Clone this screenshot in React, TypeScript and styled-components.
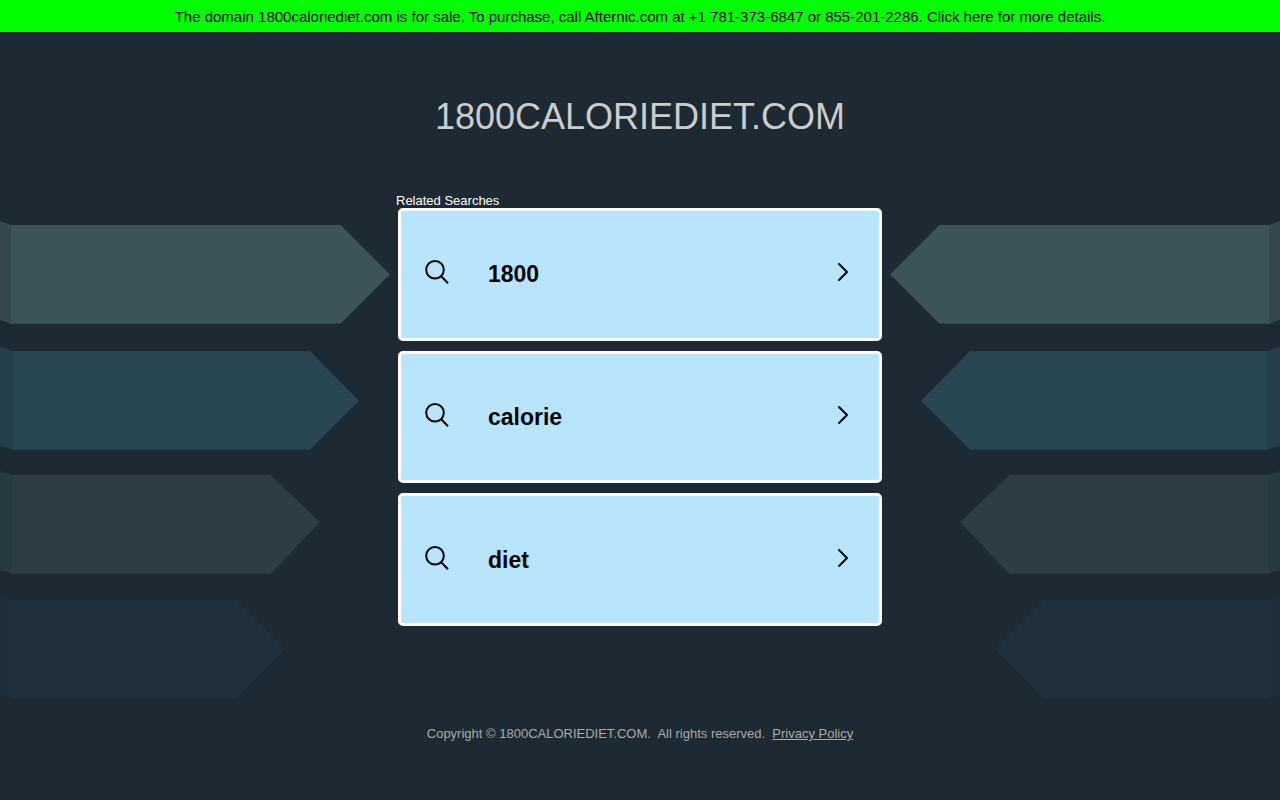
import React from "react";
import styled, { createGlobalStyle } from "styled-components";

const GlobalStyle = createGlobalStyle`
  * {
    box-sizing: border-box;
  }
  body {
    margin: 0;
    background: #1e2a33;
    font-family: "Liberation Sans", Arial, sans-serif;
  }
`;

const Page = styled.div`
  position: relative;
  min-height: 100vh;
  overflow: hidden;
  display: flex;
  flex-direction: column;
`;

const SaleBanner = styled.a`
  position: relative;
  display: block;
  padding: 8px 16px 6px;
  background: #00ff00;
  color: #000;
  font-size: 15px;
  line-height: 18px;
  text-align: center;
  text-decoration: none;
`;

const Ribbons = styled.svg`
  position: absolute;
  top: 0;
  left: 0;
  width: 100%;
  height: 800px;
`;

const Content = styled.main`
  position: relative;
  display: flex;
  flex-direction: column;
  align-items: center;
  padding: 64px 16px 0;
`;

const Title = styled.h1`
  margin: 0;
  color: #ccc;
  font-size: 36px;
  font-weight: 400;
  line-height: 42px;
`;

const Related = styled.section`
  width: 100%;
  max-width: 488px;
  margin-top: 55px;
`;

const RelatedHeading = styled.h2`
  margin: 0;
  color: #fff;
  font-size: 13px;
  font-weight: 400;
  line-height: 15px;
`;

const SearchList = styled.ul`
  display: grid;
  grid-auto-rows: 1fr;
  gap: 10px;
  height: 418px;
  margin: 0;
  padding: 0 2px;
  list-style: none;
`;

const SearchCard = styled.a`
  display: flex;
  align-items: center;
  height: 100%;
  padding: 0 30px 0 24px;
  border: 3px solid #fff;
  border-radius: 5px;
  background: #b8e5fc;
  color: #000;
  text-decoration: none;
`;

const Keyword = styled.span`
  flex: 1;
  padding-left: 39px;
  font-size: 23px;
  font-weight: 700;
  line-height: 28px;
`;

const CardIcon = styled.svg<{ $width: number }>`
  flex: none;
  width: ${(p) => p.$width}px;
  height: 24px;
  margin-bottom: 4px;
  fill: none;
  stroke: #000;
  stroke-width: 2;
`;

const Footer = styled.footer`
  position: relative;
  padding: 100px 16px 32px;
  color: #aaa;
  font-size: 13px;
  line-height: 15px;
  text-align: center;
`;

const FooterLink = styled.a`
  color: inherit;
`;

const ribbons = [
  { top: 225, fold: 11, shoulder: 340.5, tip: 390, tipY: 274.3, face: "#3c5457", side: "#34484e" },
  { top: 351, fold: 13, shoulder: 310, tip: 359, tipY: 400.7, face: "#284552", side: "#253e4b" },
  { top: 475, fold: 12, shoulder: 270.5, tip: 320, tipY: 522.3, face: "#2c3e43", side: "#283a41" },
  { top: 600, fold: 12, shoulder: 236, tip: 285, tipY: 649.3, face: "#20303c", side: "#1e2e3a" },
];

const RibbonSet = () => (
  <>
    {ribbons.map((r) => (
      <g key={r.top}>
        <polygon
          fill={r.side}
          points={`0,${r.top - 4} ${r.fold},${r.top} ${r.fold},${r.top + 98.7} 0,${r.top + 94.7}`}
        />
        <polygon
          fill={r.face}
          points={`${r.fold},${r.top} ${r.shoulder},${r.top} ${r.tip},${r.tipY} ${r.shoulder},${r.top + 98.7} ${r.fold},${r.top + 98.7}`}
        />
      </g>
    ))}
  </>
);

const searches = ["1800", "calorie", "diet"];

export default function App() {
  return (
    <>
      <GlobalStyle />
      <Page>
        <Ribbons viewBox="0 0 1280 800" preserveAspectRatio="xMidYMin slice" aria-hidden="true">
          <RibbonSet />
          <g transform="translate(1280 0) scale(-1 1)">
            <RibbonSet />
          </g>
        </Ribbons>
        <SaleBanner href="#details">
          The domain 1800caloriediet.com is for sale. To purchase, call Afternic.com at +1
          781-373-6847 or 855-201-2286. Click here for more details.
        </SaleBanner>
        <Content>
          <Title>1800CALORIEDIET.COM</Title>
          <Related>
            <RelatedHeading>Related Searches</RelatedHeading>
            <SearchList>
              {searches.map((term) => (
                <li key={term}>
                  <SearchCard href={`#${term}`}>
                    <CardIcon $width={24} viewBox="0 0 24 24" aria-hidden="true">
                      <circle cx="10" cy="9.8" r="8.8" />
                      <path d="M16.2 16.2 L23 23.2" />
                    </CardIcon>
                    <Keyword>{term}</Keyword>
                    <CardIcon $width={12} viewBox="0 0 12 24" aria-hidden="true">
                      <path d="M2 4 L10 12 L2 20" strokeLinecap="round" strokeLinejoin="round" />
                    </CardIcon>
                  </SearchCard>
                </li>
              ))}
            </SearchList>
          </Related>
        </Content>
        <Footer>
          Copyright © 1800CALORIEDIET.COM.&nbsp; All rights reserved. &nbsp;
          <FooterLink href="#privacy">Privacy Policy</FooterLink>
        </Footer>
      </Page>
    </>
  );
}
